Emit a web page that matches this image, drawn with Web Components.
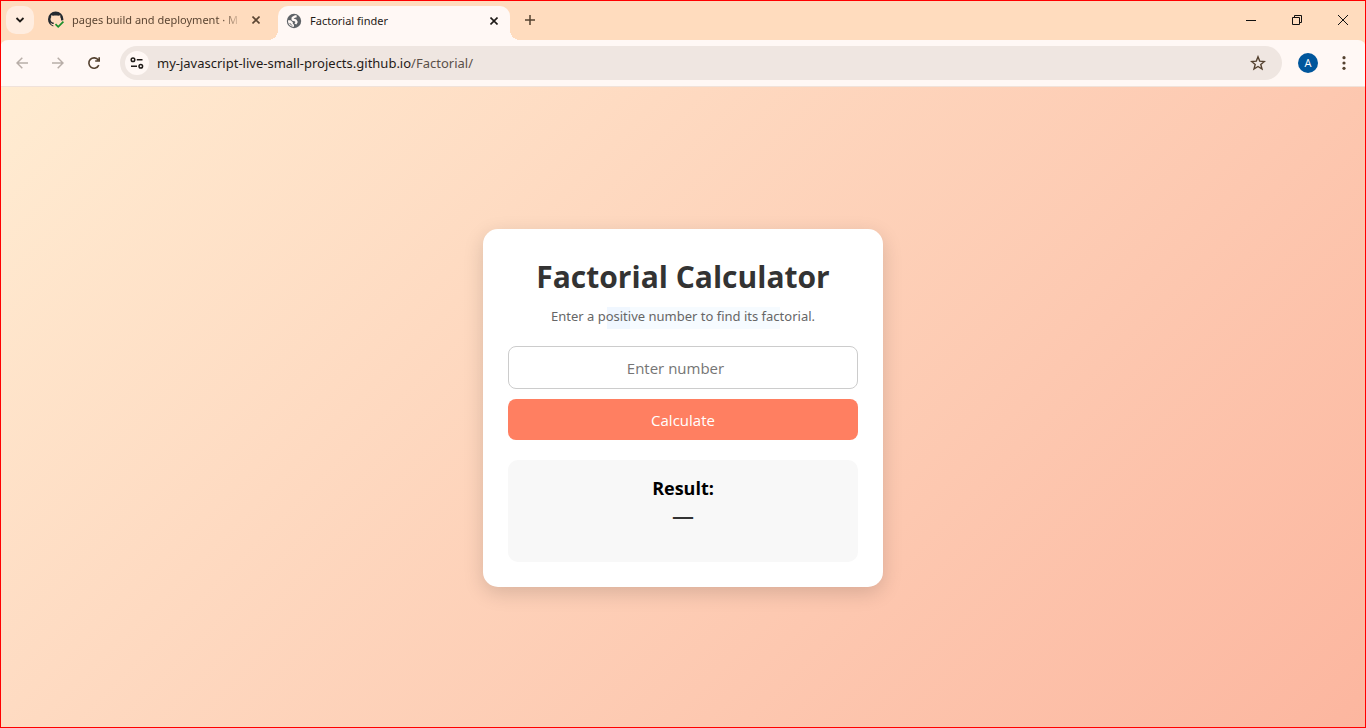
<!DOCTYPE html>
<html lang="en">
<head>
<meta charset="utf-8">
<title>Factorial finder</title>
<style>
  html, body { margin: 0; }
  body { font-family: "Open Sans", "Noto Sans", sans-serif; min-height: 100vh; display: flex; }
</style>
</head>
<body>
<browser-window>
  <tab-strip slot="tabs">
    <browser-tab label="pages build and deployment · M">
      <svg slot="icon" width="18" height="18" viewBox="0 0 18 18" aria-hidden="true">
        <path d="M6.3 15.4C3 14.400 1 11.700 1 8.300A7.700 7.700 0 0 1 16.400 8.300L16.300 9.300 14 9.500C14.200 8 14 7 13.300 6.200L13.300 4.200 11.300 4.800C9.600 4.400 7.800 4.400 6.100 4.800L4.100 4.200 4.200 6.200C2.700 8.200 3.700 11.300 7 11.800L6.500 13C5.500 13.300 4.700 12.800 4.200 12L3.200 11.600 4.300 13.300C4.800 14.200 5.500 14.400 6.300 14.300Z" fill="#24292f"/>
        <path d="M8.500 13.200l2.700 2.600 5.200-5.200" fill="none" stroke="#1a8f2c" stroke-width="1.700"/>
      </svg>
    </browser-tab>
    <browser-tab label="Factorial finder" active>
      <svg slot="icon" width="16" height="16" viewBox="0 0 16 16" aria-hidden="true">
        <circle cx="8" cy="8" r="7.200" fill="#5f6368"/>
        <path d="M2 7.200H4.600L6.800 9.300V10.800L8 11.800V13.800C4.400 13.800 1.700 10.800 2 7.200Z" fill="#fff8f5"/>
        <path d="M3.600 10L6 12.600" stroke="#5f6368" stroke-width="1"/>
        <path d="M10.600 3.200L8.600 3.600 6.600 5V6.600L9.600 7.400 10.600 9 9.400 11" fill="none" stroke="#fff8f5" stroke-width="2.200" stroke-linejoin="round"/>
      </svg>
    </browser-tab>
  </tab-strip>
  <address-toolbar slot="toolbar"></address-toolbar>
  <factorial-page>
    <factorial-card></factorial-card>
  </factorial-page>
</browser-window>

<script>
const define = (name, html, setup) => customElements.define(name, class extends HTMLElement {
  connectedCallback() {
    if (this.shadowRoot) return;
    const t = document.createElement('template');
    t.innerHTML = html;
    this.attachShadow({ mode: 'open' }).append(t.content.cloneNode(true));
    if (setup) setup(this, this.shadowRoot);
  }
});

const base = `
  *, *::before, *::after { box-sizing: border-box; }
  button { border: 0; padding: 0; margin: 0; background: none; font: inherit; color: inherit; display: grid; place-items: center; }
  svg { display: block; }
`;

define('browser-window', `
  <style>${base}
    :host { position: relative; flex: 1; display: flex; flex-direction: column; background: #ffdcbe; }
    :host::after { content: ""; position: absolute; inset: 0; border: 1px solid #f00; pointer-events: none; }
    .page { flex: 1; display: flex; }
  </style>
  <slot name="tabs"></slot>
  <slot name="toolbar"></slot>
  <div class="page"><slot></slot></div>
`);

define('tab-strip', `
  <style>${base}
    :host { display: flex; height: 40px; padding-left: 6px; box-sizing: border-box; }
    .search { width: 28px; height: 28px; margin-top: 6px; border-radius: 10px; background: #ffede0; color: #1f1b18; }
    .tabs { display: flex; padding-left: 6px; }
    .new { width: 28px; height: 28px; margin: 6px 0 0 6px; color: #54412f; }
    .win { display: flex; margin-left: auto; color: #111; }
    .win button { width: 46px; height: 40px; }
  </style>
  <button class="search" aria-label="Search tabs"><svg width="10" height="8" viewBox="0 0 10 8"><path d="M1.500 2l3.500 3.500L8.500 2" fill="none" stroke="currentColor" stroke-width="1.800"/></svg></button>
  <div class="tabs"><slot></slot></div>
  <button class="new" aria-label="New tab"><svg width="12" height="12" viewBox="0 0 12 12"><path d="M6 1v10M1 6h10" stroke="currentColor" stroke-width="1.500"/></svg></button>
  <div class="win">
    <button aria-label="Minimize"><svg width="10" height="10" viewBox="0 0 10 10"><path d="M0 5.500h10" stroke="currentColor"/></svg></button>
    <button aria-label="Restore"><svg width="10" height="10" viewBox="0 0 10 10"><path d="M.5 2.500h7v7h-7zM2.500 2.500v-2h7v7h-2" fill="none" stroke="currentColor"/></svg></button>
    <button aria-label="Close"><svg width="10" height="10" viewBox="0 0 10 10"><path d="M0 0l10 10M10 0L0 10" stroke="currentColor"/></svg></button>
  </div>
`);

define('browser-tab', `
  <style>${base}
    :host { position: relative; box-sizing: border-box; display: flex; align-items: center; width: 238px; height: 40px; padding: 0 14px 0 7px; font-family: "Noto Sans", "Open Sans", sans-serif; font-size: 11px; line-height: 16px; color: #5c4633; }
    :host([active]) { width: 232px; height: 34px; margin-top: 6px; padding: 0 8px 5px; border-radius: 10px 10px 0 0; background: #fff8f5; color: #1f1b18; }
    :host([active])::before, :host([active])::after { content: ""; position: absolute; bottom: 0; width: 10px; height: 10px; }
    :host([active])::before { right: 100%; background: radial-gradient(circle at 0 0, transparent 10px, #fff8f5 10px); }
    :host([active])::after { left: 100%; background: radial-gradient(circle at 100% 0, transparent 10px, #fff8f5 10px); }
    ::slotted(svg) { flex: none; display: block; }
    .label { flex: 1; margin-left: 8px; white-space: nowrap; }
    :host(:not([active])) .label { margin-left: 7px; mask-image: linear-gradient(to right, #000 150px, transparent 170px); }
    button { width: 16px; height: 16px; margin-left: 8px; }
  </style>
  <slot name="icon"></slot><span class="label"></span>
  <button aria-label="Close tab"><svg width="8" height="8" viewBox="0 0 8 8"><path d="M.5 .5l7 7M7.500 .5l-7 7" stroke="currentColor" stroke-width="1.600"/></svg></button>
`, (host, root) => { root.querySelector('.label').textContent = host.getAttribute('label'); });

define('address-toolbar', `
  <style>${base}
    :host { box-sizing: border-box; display: flex; align-items: center; height: 47px; padding: 0 8px 1px; background: #fff8f5; border-bottom: 1px solid #f0e2da; border-radius: 8px 8px 0 0; color: #54412f; }
    .nav { width: 28px; height: 28px; margin-right: 8px; }
    .nav[disabled] { color: #b8aea8; }
    .bar { flex: 1; display: flex; align-items: center; height: 34px; margin-left: 4px; padding: 0 10px 0 5px; border-radius: 17px; background: #efe6e1; }
    .site { width: 24px; height: 24px; border-radius: 50%; background: #fff8f5; color: #1f1b18; }
    .url { flex: 1; margin-left: 8px; font-family: "Noto Sans", "Open Sans", sans-serif; font-size: 13px; line-height: 20px; color: #5a504a; white-space: nowrap; text-decoration: none; }
    .url b { font-weight: 400; color: #1f1b18; }
    .star { width: 28px; height: 28px; }
    .avatar { width: 20px; height: 20px; margin: 0 12px 0 16px; border-radius: 50%; background: #00569c; color: #fff; font-size: 11px; line-height: 20px; }
    .more { width: 28px; height: 28px; }
  </style>
  <button class="nav" disabled aria-label="Back"><svg width="12" height="12" viewBox="0 0 12 12"><path d="M12 6H1M6.300 .7L1 6l5.300 5.300" fill="none" stroke="currentColor" stroke-width="1.500"/></svg></button>
  <button class="nav" disabled aria-label="Forward"><svg width="12" height="12" viewBox="0 0 12 12"><path d="M0 6h11M5.700 .7L11 6l-5.300 5.300" fill="none" stroke="currentColor" stroke-width="1.500"/></svg></button>
  <button class="nav" aria-label="Reload"><svg width="14" height="14" viewBox="0 0 14 14"><path d="M11.800 9.200A5.200 5.200 0 1 1 11.300 4M12.200 1.200V5H8.200" fill="none" stroke="currentColor" stroke-width="1.600"/></svg></button>
  <div class="bar">
    <button class="site" aria-label="Site information"><svg width="14" height="12" viewBox="0 0 14 12" fill="none" stroke="currentColor" stroke-width="1.500"><circle cx="3" cy="2.700" r="1.800"/><path d="M6.800 2.700H12.500M1 9.200H7"/><circle cx="10.800" cy="9.200" r="1.800"/></svg></button>
    <a class="url" href="#"><b>my-javascript-live-small-projects.github.io</b>/Factorial/</a>
    <button class="star" aria-label="Bookmark this tab"><svg width="16" height="16" viewBox="0 0 16 16"><path d="M8 1.800l1.700 4.300 4.700.4-3.600 3 1.200 4.500L8 11.500 4 14l1.200-4.500-3.600-3 4.700-.4z" fill="none" stroke="currentColor" stroke-width="1.400"/></svg></button>
  </div>
  <button class="avatar" aria-label="Profile">A</button>
  <button class="more" aria-label="Menu"><svg width="4" height="14" viewBox="0 0 4 14" fill="currentColor"><circle cx="2" cy="1.700" r="1.600"/><circle cx="2" cy="7" r="1.600"/><circle cx="2" cy="12.300" r="1.600"/></svg></button>
`);

define('factorial-page', `
  <style>
    :host { flex: 1; display: flex; align-items: center; justify-content: center; padding-top: 1px; background: linear-gradient(135deg, #ffecd2, #fcb69f); }
  </style>
  <slot></slot>
`);

define('factorial-card', `
  <style>${base}
    :host { position: relative; box-sizing: border-box; width: 400px; max-width: 100%; padding: 25px; border-radius: 15px; background: #fff; box-shadow: 0 6px 20px rgba(0, 0, 0, .15); text-align: center; }
    h1 { margin: 0 0 7px; font-size: 30px; line-height: 46px; color: #333; }
    p { margin: 0 0 20px; font-family: "Noto Sans", "Open Sans", sans-serif; font-size: 13px; line-height: 19px; color: #666; }
    .hint { position: relative; }
    .hint span { position: relative; }
    .hint::before { content: ""; position: absolute; left: 99px; top: 0; width: 173px; height: 22px; background: linear-gradient(to right, #f0f7ff 23px, #f6fbff 23px); }
    form { display: flex; flex-direction: column; gap: 10px; }
    input { width: 100%; height: 43px; margin: 0; padding: 10px; border: 1px solid #ccc; border-radius: 8px; background: #fff; font: 15px/21px "Open Sans", "Noto Sans", sans-serif; text-align: center; outline: 0; }
    input::placeholder { color: #757575; }
    form button { height: 41px; padding-top: 2px; border-radius: 8px; background: #ff7f61; color: #fff; font-size: 15px; line-height: 21px; }
    .result { margin-top: 20px; height: 102px; padding: 15px; border-radius: 10px; background: #f8f8f8; }
    h2 { margin: 0; font-size: 18px; line-height: 27px; color: #000; }
    output { display: block; font-size: 22px; line-height: 26px; font-weight: 600; color: #333; overflow-wrap: anywhere; }
  </style>
  <h1>Factorial Calculator</h1>
  <p class="hint"><span>Enter a positive number to find its factorial.</span></p>
  <form>
    <input id="n" type="number" min="0" placeholder="Enter number" aria-label="Enter number">
    <button type="submit">Calculate</button>
  </form>
  <div class="result"><h2>Result:</h2><output for="n">—</output></div>
`, (host, root) => {
  root.querySelector('form').addEventListener('submit', e => {
    e.preventDefault();
    const n = root.querySelector('input').valueAsNumber;
    let r = 1;
    for (let i = 2; i <= n; i++) r *= i;
    root.querySelector('output').textContent = n >= 0 ? r : '—';
  });
});
</script>
</body>
</html>
